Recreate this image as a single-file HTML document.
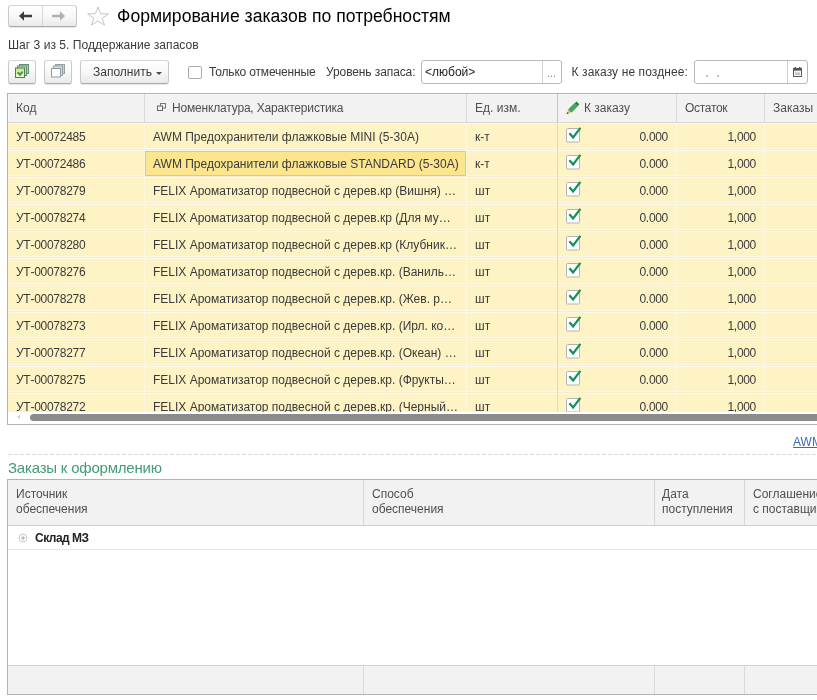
<!DOCTYPE html>
<html>
<head>
<meta charset="utf-8">
<style>
html,body{margin:0;padding:0;}
body{width:817px;height:700px;overflow:hidden;background:#fff;font-family:"Liberation Sans",sans-serif;font-size:12px;color:#3a3a3a;position:relative;transform:translateZ(0);}
.abs{position:absolute;}
.btn{position:absolute;box-sizing:border-box;border:1px solid #c8c8c8;border-top-color:#d4d4d4;border-bottom-color:#a9a9a9;border-radius:3px;background:linear-gradient(#ffffff 0%,#f8f8f8 50%,#e9e9e9 100%);box-shadow:0 1px 1px rgba(0,0,0,0.10);}
.txt{position:absolute;white-space:nowrap;line-height:14px;}
.inp{position:absolute;box-sizing:border-box;border:1px solid #b8b8b8;border-radius:3px;background:#fff;}
/* table 1 */
#t1{position:absolute;left:7px;top:93px;width:820px;height:332px;box-sizing:border-box;border:1px solid #b2b2b2;border-right:none;background:#fff;overflow:hidden;}
#t1 .hdr{position:absolute;left:0;top:0;width:820px;height:29px;background:#f2f2f2;border-bottom:1px solid #d6d6d6;box-sizing:border-box;box-shadow:inset 1px 1px 0 #f9f9f9;}
#t1 .row{position:absolute;left:0;width:820px;height:27px;background:linear-gradient(#fdf8e4 0,#fdf8e4 1px,#fef3c4 1px,#fef3c4 25px,#fdf8e4 25px,#fdf8e4 26px,#f3ecd8 26px,#f3ecd8 27px);box-sizing:border-box;}
#t1 .c{position:absolute;top:0;height:100%;box-sizing:border-box;white-space:nowrap;overflow:hidden;line-height:26px;padding-top:1px;font-size:12px;color:#3a3a3a;}
#t1 .hdr .c{line-height:26px;padding-top:1px;color:#4f4f4f;border-left:1px solid #dadada;}
#t1 .row .c{border-left:1px solid #fdf8dc;}
#t1 .c0{left:0;width:136px;padding-left:8px;border-left:none !important;letter-spacing:-0.27px;}
#t1 .hdr .c0{letter-spacing:0;}
#t1 .c1{left:136px;width:322px;padding-left:8px;}
#t1 .c2{left:458px;width:91px;padding-left:8px;}
#t1 .c3{left:549px;width:119px;border-left:1px solid #e0d8bf !important;}
#t1 .hdr .c3{border-left:1px solid #c4c4c4 !important;}
#t1 .c4{left:668px;width:88px;text-align:right;padding-right:8px;letter-spacing:-0.3px;}
#t1 .c5{left:756px;width:70px;padding-left:8px;}
.num{position:absolute;right:8px;top:1px;letter-spacing:-0.3px;}
.chk{position:absolute;left:8px;top:3px;}
#sel{position:absolute;left:137px;top:57px;width:321px;height:25px;box-sizing:border-box;border:1px solid #edcb4d;background:#fce58f;line-height:24px;padding-left:7px;padding-top:0;white-space:nowrap;font-size:12px;color:#3a3a3a;overflow:hidden;}
#sb{position:absolute;left:0;top:318px;width:820px;height:13px;background:#fff;}
#sbt{position:absolute;left:22px;top:2px;width:810px;height:7px;background:#8b8b8b;border-radius:3.5px;}
#sba{position:absolute;left:9px;top:3px;width:0;height:0;border-top:2px solid transparent;border-bottom:2px solid transparent;border-right:3px solid #cfcfcf;}
/* table 2 */
#t2{position:absolute;left:7px;top:479px;width:820px;height:216px;box-sizing:border-box;border:1px solid #b2b2b2;border-right:none;background:#fff;overflow:hidden;}
#t2 .hdr{position:absolute;left:0;top:0;width:820px;height:46px;background:#f2f2f2;border-bottom:1px solid #cfcfcf;box-sizing:border-box;}
#t2 .h{position:absolute;top:0;height:45px;box-sizing:border-box;border-left:1px solid #d6d6d6;padding:7px 0 0 8px;line-height:15px;font-size:12px;color:#4f4f4f;white-space:nowrap;}
#t2 .ftr{position:absolute;left:0;top:185px;width:820px;height:29px;background:#f2f2f2;border-top:1px solid #d2d2d2;box-sizing:border-box;}
#t2 .f{position:absolute;top:0;height:29px;border-left:1px solid #d9d9d9;}
</style>
</head>
<body>

<!-- nav buttons -->
<div class="btn" style="left:7.5px;top:5px;width:69px;height:22px;"></div>
<div class="abs" style="left:42px;top:6px;width:1px;height:20px;background:#d6d6d6;"></div>
<svg class="abs" style="left:18px;top:10px;" width="16" height="12" viewBox="0 0 16 12"><path d="M1 6 L6 1.2 L6 4.8 L14 4.8 L14 7.2 L6 7.2 L6 10.8 Z" fill="#3c3c3c"/></svg>
<svg class="abs" style="left:50px;top:10px;" width="16" height="12" viewBox="0 0 16 12"><path d="M15 6 L10 1.2 L10 4.8 L2 4.8 L2 7.2 L10 7.2 L10 10.8 Z" fill="#b0b0b0"/></svg>

<!-- star -->
<svg class="abs" style="left:85.5px;top:5.7px;" width="24" height="22" viewBox="0 0 24 22"><path d="M12.00 1.00 L14.56 7.76 L22.37 7.91 L16.15 12.24 L18.41 19.09 L12.00 15.00 L5.59 19.09 L7.85 12.24 L1.63 7.91 L9.44 7.76 Z" fill="#fff" stroke="#c4c4c4" stroke-width="1"/></svg>

<!-- title -->
<div class="txt" id="title" style="left:117px;top:5px;font-size:17.6px;line-height:22px;color:#000;">Формирование заказов по потребностям</div>

<div class="txt" id="step" style="left:8px;top:38px;font-size:12.1px;color:#3a3a3a;">Шаг 3 из 5. Поддержание запасов</div>

<!-- toolbar -->
<div class="btn" style="left:8px;top:60px;width:28px;height:24px;"></div>
<div class="btn" style="left:44px;top:60px;width:28px;height:24px;"></div>
<div class="btn" style="left:80px;top:60px;width:89px;height:24px;"></div>
<div class="txt" id="fill" style="left:93px;top:65px;">Заполнить</div>
<div class="abs" style="left:156px;top:72px;width:0;height:0;border-left:3px solid transparent;border-right:3px solid transparent;border-top:3px solid #4a4a4a;"></div>

<!-- icon: check all -->
<svg class="abs" style="left:13.5px;top:62.5px;" width="16" height="16" viewBox="0 0 16 16">
<defs><linearGradient id="gg" x1="0" y1="0" x2="0" y2="1"><stop offset="0" stop-color="#c3e596"/><stop offset="1" stop-color="#f3faea"/></linearGradient></defs>
<rect x="5.5" y="1.5" width="9" height="9" fill="#b5d2b8" stroke="#5f8f6c"/>
<rect x="3.5" y="3" width="9" height="9.5" fill="#bfd9c2" stroke="#5f8f6c"/>
<rect x="1.5" y="5" width="9" height="9.5" fill="url(#gg)" stroke="#567a56"/>
<path d="M3.6 9.2 L6 11.8 L8.6 8.6" fill="none" stroke="#4b9a1e" stroke-width="2"/>
</svg>
<!-- icon: uncheck all -->
<svg class="abs" style="left:49.5px;top:62.7px;" width="16" height="16" viewBox="0 0 16 16">
<rect x="5.5" y="1.5" width="9" height="9" fill="#c9d3d7" stroke="#93a0a6"/>
<rect x="3.5" y="3" width="9" height="9.5" fill="#d5dde0" stroke="#93a0a6"/>
<rect x="1.5" y="5.5" width="9" height="8.5" fill="#fbfdfe" stroke="#8f9aa1"/>
</svg>

<!-- checkbox -->
<div class="abs" style="left:188px;top:65.5px;width:12px;height:11px;border:1px solid #ababab;border-radius:2px;background:#fff;"></div>
<div class="txt" id="l1" style="left:209px;top:65px;letter-spacing:-0.17px;">Только отмеченные</div>
<div class="txt" id="l2" style="left:326px;top:65px;letter-spacing:-0.1px;">Уровень запаса:</div>
<div class="inp" style="left:421px;top:60px;width:141px;height:24px;"></div>
<div class="abs" style="left:542px;top:61px;width:1px;height:22px;background:#d2d2d2;"></div>
<div class="txt" id="any" style="left:425px;top:65px;color:#222;">&lt;любой&gt;</div>
<div class="txt" style="left:547px;top:66px;font-size:11px;color:#8a8a8a;">...</div>
<div class="txt" id="l3" style="left:571.5px;top:65px;letter-spacing:0.1px;">К заказу не позднее:</div>
<div class="inp" style="left:694px;top:60px;width:114px;height:24px;"></div>
<div class="abs" style="left:787px;top:61px;width:1px;height:22px;background:#d2d2d2;"></div>
<div class="abs" style="left:706px;top:75px;width:2px;height:2px;background:#c2c2c2;"></div><div class="abs" style="left:717px;top:75px;width:2px;height:2px;background:#c2c2c2;"></div>
<svg class="abs" style="left:793px;top:67px;" width="9" height="10" viewBox="0 0 9 10"><rect x="0.5" y="1.5" width="8" height="8" fill="#f4f4f4" stroke="#606060"/><rect x="0" y="1" width="9" height="2.6" fill="#555"/><rect x="1.5" y="0" width="1.5" height="2" fill="#555"/><rect x="6" y="0" width="1.5" height="2" fill="#555"/><rect x="2" y="5.5" width="5" height="2.5" fill="#c4c4c4"/></svg>

<!-- TABLE 1 -->
<div id="t1">
<div class="hdr">
<div class="c c0">Код</div>
<div class="c c1"><svg class="abs" style="left:12px;top:8.5px;" width="9" height="9" viewBox="0 0 9 9"><rect x="3.5" y="0.5" width="5" height="4.5" fill="#f2f2f2" stroke="#777"/><rect x="0.5" y="3" width="5" height="4.5" fill="#f2f2f2" stroke="#666"/></svg><span style="padding-left:19px;letter-spacing:-0.18px;">Номенклатура, Характеристика</span></div>
<div class="c c2">Ед. изм.</div>
<div class="c c3"><svg class="abs" style="left:8px;top:7px;" width="15" height="15" viewBox="0 0 15 15"><path d="M0.60 13.20 L3.00 12.21 L1.59 10.80 Z" fill="#3a3a3a"/><path d="M3.00 12.21 L5.41 11.22 L2.58 8.39 L1.59 10.80 Z" fill="#e7c340"/><path d="M5.41 11.22 L11.91 4.71 L9.09 1.89 L2.58 8.39 Z" fill="#43a862" stroke="#2e8048" stroke-width="0.6"/><path d="M11.91 4.71 L13.33 3.30 L10.50 0.47 L9.09 1.89 Z" fill="#2a7a44"/></svg><span style="padding-left:26px;">К заказу</span></div>
<div class="c c4" style="text-align:left;padding-left:8px;">Остаток</div>
<div class="c c5">Заказы к</div>
</div>
<!--ROWS-->
<div class="row" style="top:29px;"><div class="c c0">УТ-00072485</div><div class="c c1">AWM Предохранители флажковые MINI (5-30A)</div><div class="c c2">к-т</div><div class="c c3"><svg class="chk" width="16" height="17" viewBox="0 0 16 17"><rect x="0.5" y="2.5" width="13" height="13.5" rx="1" fill="#fff" stroke="#b3b3b3"/><path d="M3.4 7.2 L7.1 11.4 L14.4 1.9" fill="none" stroke="#17915a" stroke-width="2.3"/></svg><span class="num">0.000</span></div><div class="c c4">1,000</div><div class="c c5"></div></div>
<div class="row" style="top:56px;"><div class="c c0">УТ-00072486</div><div class="c c1">AWM Предохранители флажковые STANDARD (5-30A)</div><div class="c c2">к-т</div><div class="c c3"><svg class="chk" width="16" height="17" viewBox="0 0 16 17"><rect x="0.5" y="2.5" width="13" height="13.5" rx="1" fill="#fff" stroke="#b3b3b3"/><path d="M3.4 7.2 L7.1 11.4 L14.4 1.9" fill="none" stroke="#17915a" stroke-width="2.3"/></svg><span class="num">0.000</span></div><div class="c c4">1,000</div><div class="c c5"></div></div>
<div class="row" style="top:83px;"><div class="c c0">УТ-00078279</div><div class="c c1">FELIX Ароматизатор подвесной с дерев.кр (Вишня) …</div><div class="c c2">шт</div><div class="c c3"><svg class="chk" width="16" height="17" viewBox="0 0 16 17"><rect x="0.5" y="2.5" width="13" height="13.5" rx="1" fill="#fff" stroke="#b3b3b3"/><path d="M3.4 7.2 L7.1 11.4 L14.4 1.9" fill="none" stroke="#17915a" stroke-width="2.3"/></svg><span class="num">0.000</span></div><div class="c c4">1,000</div><div class="c c5"></div></div>
<div class="row" style="top:110px;"><div class="c c0">УТ-00078274</div><div class="c c1">FELIX Ароматизатор подвесной с дерев.кр (Для му…</div><div class="c c2">шт</div><div class="c c3"><svg class="chk" width="16" height="17" viewBox="0 0 16 17"><rect x="0.5" y="2.5" width="13" height="13.5" rx="1" fill="#fff" stroke="#b3b3b3"/><path d="M3.4 7.2 L7.1 11.4 L14.4 1.9" fill="none" stroke="#17915a" stroke-width="2.3"/></svg><span class="num">0.000</span></div><div class="c c4">1,000</div><div class="c c5"></div></div>
<div class="row" style="top:137px;"><div class="c c0">УТ-00078280</div><div class="c c1">FELIX Ароматизатор подвесной с дерев.кр (Клубник…</div><div class="c c2">шт</div><div class="c c3"><svg class="chk" width="16" height="17" viewBox="0 0 16 17"><rect x="0.5" y="2.5" width="13" height="13.5" rx="1" fill="#fff" stroke="#b3b3b3"/><path d="M3.4 7.2 L7.1 11.4 L14.4 1.9" fill="none" stroke="#17915a" stroke-width="2.3"/></svg><span class="num">0.000</span></div><div class="c c4">1,000</div><div class="c c5"></div></div>
<div class="row" style="top:164px;"><div class="c c0">УТ-00078276</div><div class="c c1">FELIX Ароматизатор подвесной с дерев.кр. (Ваниль…</div><div class="c c2">шт</div><div class="c c3"><svg class="chk" width="16" height="17" viewBox="0 0 16 17"><rect x="0.5" y="2.5" width="13" height="13.5" rx="1" fill="#fff" stroke="#b3b3b3"/><path d="M3.4 7.2 L7.1 11.4 L14.4 1.9" fill="none" stroke="#17915a" stroke-width="2.3"/></svg><span class="num">0.000</span></div><div class="c c4">1,000</div><div class="c c5"></div></div>
<div class="row" style="top:191px;"><div class="c c0">УТ-00078278</div><div class="c c1">FELIX Ароматизатор подвесной с дерев.кр. (Жев. р…</div><div class="c c2">шт</div><div class="c c3"><svg class="chk" width="16" height="17" viewBox="0 0 16 17"><rect x="0.5" y="2.5" width="13" height="13.5" rx="1" fill="#fff" stroke="#b3b3b3"/><path d="M3.4 7.2 L7.1 11.4 L14.4 1.9" fill="none" stroke="#17915a" stroke-width="2.3"/></svg><span class="num">0.000</span></div><div class="c c4">1,000</div><div class="c c5"></div></div>
<div class="row" style="top:218px;"><div class="c c0">УТ-00078273</div><div class="c c1">FELIX Ароматизатор подвесной с дерев.кр. (Ирл. ко…</div><div class="c c2">шт</div><div class="c c3"><svg class="chk" width="16" height="17" viewBox="0 0 16 17"><rect x="0.5" y="2.5" width="13" height="13.5" rx="1" fill="#fff" stroke="#b3b3b3"/><path d="M3.4 7.2 L7.1 11.4 L14.4 1.9" fill="none" stroke="#17915a" stroke-width="2.3"/></svg><span class="num">0.000</span></div><div class="c c4">1,000</div><div class="c c5"></div></div>
<div class="row" style="top:245px;"><div class="c c0">УТ-00078277</div><div class="c c1">FELIX Ароматизатор подвесной с дерев.кр. (Океан) …</div><div class="c c2">шт</div><div class="c c3"><svg class="chk" width="16" height="17" viewBox="0 0 16 17"><rect x="0.5" y="2.5" width="13" height="13.5" rx="1" fill="#fff" stroke="#b3b3b3"/><path d="M3.4 7.2 L7.1 11.4 L14.4 1.9" fill="none" stroke="#17915a" stroke-width="2.3"/></svg><span class="num">0.000</span></div><div class="c c4">1,000</div><div class="c c5"></div></div>
<div class="row" style="top:272px;"><div class="c c0">УТ-00078275</div><div class="c c1">FELIX Ароматизатор подвесной с дерев.кр. (Фрукты…</div><div class="c c2">шт</div><div class="c c3"><svg class="chk" width="16" height="17" viewBox="0 0 16 17"><rect x="0.5" y="2.5" width="13" height="13.5" rx="1" fill="#fff" stroke="#b3b3b3"/><path d="M3.4 7.2 L7.1 11.4 L14.4 1.9" fill="none" stroke="#17915a" stroke-width="2.3"/></svg><span class="num">0.000</span></div><div class="c c4">1,000</div><div class="c c5"></div></div>
<div class="row" style="top:299px;"><div class="c c0">УТ-00078272</div><div class="c c1">FELIX Ароматизатор подвесной с дерев.кр. (Черный…</div><div class="c c2">шт</div><div class="c c3"><svg class="chk" width="16" height="17" viewBox="0 0 16 17"><rect x="0.5" y="2.5" width="13" height="13.5" rx="1" fill="#fff" stroke="#b3b3b3"/><path d="M3.4 7.2 L7.1 11.4 L14.4 1.9" fill="none" stroke="#17915a" stroke-width="2.3"/></svg><span class="num">0.000</span></div><div class="c c4">1,000</div><div class="c c5"></div></div>
<!--/ROWS-->
<div id="sel">AWM Предохранители флажковые STANDARD (5-30A)</div>
<div id="sb"><div id="sbt"></div><div id="sba"></div></div>
</div>

<div class="txt" id="awm" style="left:793px;top:435px;font-size:12px;color:#3a6cb4;text-decoration:underline;">AWM</div>

<div class="abs" style="left:8px;top:454px;width:809px;height:1px;background:repeating-linear-gradient(90deg,#d9d9d9 0,#d9d9d9 4px,transparent 4px,transparent 6px);"></div>
<div class="txt" id="zak" style="left:8px;top:459px;font-size:15px;line-height:18px;letter-spacing:-0.21px;color:#429c74;">Заказы к оформлению</div>

<!-- TABLE 2 -->
<div id="t2">
<div class="hdr">
<div class="h" style="left:0;width:355px;border-left:none;">Источник<br>обеспечения</div>
<div class="h" style="left:355px;width:290px;">Способ<br>обеспечения</div>
<div class="h" style="left:646px;width:90px;padding-left:7px;">Дата<br>поступления</div>
<div class="h" style="left:736px;width:90px;">Соглашение<br>с поставщиком</div>
</div>
<div class="abs" style="left:0;top:46px;width:820px;height:23px;border-bottom:1px solid #e4e4e4;"></div>
<div class="txt" id="sklad" style="left:27px;top:51px;font-weight:bold;color:#222;letter-spacing:-0.5px;">Склад МЗ</div>
<svg class="abs" style="left:10px;top:53px;" width="10" height="10" viewBox="0 0 10 10"><circle cx="5" cy="5" r="4" fill="#fff" stroke="#c9c9c9"/><path d="M2.8 5 H7.2 M5 2.8 V7.2" stroke="#a8a8a8" stroke-width="1"/></svg>
<div class="ftr">
<div class="f" style="left:355px;"></div>
<div class="f" style="left:646px;"></div>
<div class="f" style="left:736px;"></div>
</div>
</div>

</body>
</html>
